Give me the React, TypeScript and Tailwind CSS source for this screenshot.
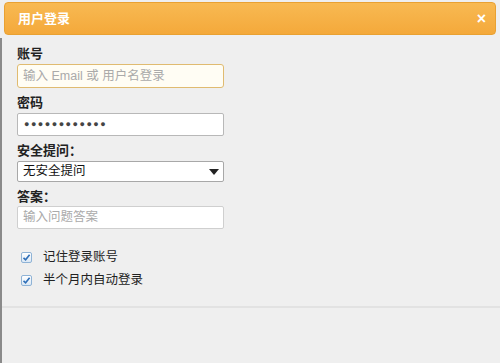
import React from "react";

const font = { fontFamily: '"Liberation Sans", "Noto Sans CJK SC", sans-serif' };

function Check() {
  return (
    <span className="flex h-[11px] w-[11px] items-center justify-center rounded-[2px] border border-[#8fb3d6] bg-gradient-to-b from-white to-[#dbe8f5]">
      <svg width="9" height="9" viewBox="0 0 9 9">
        <path d="M1.5 4.8 L3.6 6.8 L7.6 1.8" fill="none" stroke="#2f6fb8" strokeWidth="1.6" />
      </svg>
    </span>
  );
}

export default function App() {
  return (
    <div className="relative h-[363px] w-[500px] overflow-hidden bg-[#efefef]" style={font}>
      <div className="absolute left-0 top-[38px] h-[325px] w-[2px] bg-[#8a8a8a]" />
      <div className="px-[4px] pt-[2px]">
        <div className="flex h-[33px] items-center justify-between rounded-[4px] border border-[#e9a132] bg-gradient-to-b from-[#f8b952] to-[#f4a93a] pl-[13px] pr-[9px]">
          <span className="text-[13px] font-bold text-white">用户登录</span>
          <span className="text-[16px] font-bold leading-none text-white">×</span>
        </div>
      </div>
      <div className="flex flex-col pl-[17px] pt-[11px]">
        <label className="text-[13px] font-bold leading-[16px] text-[#222]">账号</label>
        <div className="mt-[2px] flex h-[24px] w-[207px] items-center rounded-[3px] border border-[#e0bb70] bg-[#fffdf4] px-[5px] text-[12.5px] text-[#aaa]">
          输入 Email 或 用户名登录
        </div>
        <label className="mt-[7px] text-[13px] font-bold leading-[16px] text-[#222]">密码</label>
        <div className="mt-[2px] flex h-[23px] w-[207px] items-center rounded-[2px] border border-[#b8b8b8] bg-white px-[6px] text-[9px] tracking-[1.5px] text-[#444]">
          ●●●●●●●●●●●●
        </div>
        <label className="mt-[7px] text-[13px] font-bold leading-[16px] text-[#222]">安全提问：</label>
        <div className="mt-[2px] flex h-[21px] w-[207px] items-center justify-between rounded-[2px] border border-[#a8a8a8] bg-white pl-[5px] pr-[4px] text-[12.5px] text-[#111]">
          <span>无安全提问</span>
          <svg width="10" height="6" viewBox="0 0 10 6">
            <path d="M0 0 L10 0 L5 6 Z" fill="#222" />
          </svg>
        </div>
        <label className="mt-[7px] text-[13px] font-bold leading-[16px] text-[#222]">答案：</label>
        <div className="mt-[1px] flex h-[23px] w-[207px] items-center rounded-[2px] border border-[#cfcfcf] bg-white px-[5px] text-[12.5px] text-[#aaa]">
          输入问题答案
        </div>
        <div className="mt-[20px] flex h-[16px] items-center gap-[11px] pl-[4px] text-[12.5px] text-[#222]">
          <Check />
          <span>记住登录账号</span>
        </div>
        <div className="mt-[7px] flex h-[16px] items-center gap-[11px] pl-[4px] text-[12.5px] text-[#222]">
          <Check />
          <span>半个月内自动登录</span>
        </div>
      </div>
      <div className="mt-[18px] h-[2px] w-full bg-[#e2e2e2]" />
    </div>
  );
}
